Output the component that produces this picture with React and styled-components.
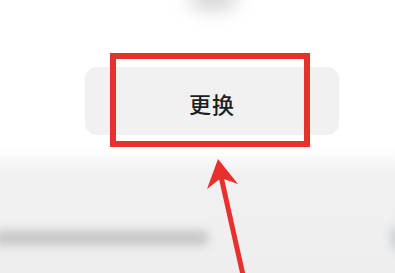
import React from 'react'
import styled, { createGlobalStyle } from 'styled-components'

const GlobalStyle = createGlobalStyle`
  html, body {
    margin: 0;
    padding: 0;
    background: #ffffff;
  }
  body {
    font-family: "Noto Sans CJK SC", "Noto Sans", sans-serif;
  }
`

const Screen = styled.div`
  position: relative;
  width: 395px;
  height: 273px;
  overflow: hidden;
  display: flex;
  flex-direction: column;
  background: #ffffff;
`

const Header = styled.div`
  height: 50px;
  display: flex;
  justify-content: center;
  padding-left: 30px;
`

const Avatar = styled.div`
  width: 50px;
  height: 30px;
  margin-top: -18px;
  border-radius: 50%;
  background: #d8d8d8;
  filter: blur(9px);
`

const ActionRow = styled.div`
  position: relative;
  display: flex;
  padding: 17px 0 0 85px;
  height: 98px;
  box-sizing: border-box;
`

const SwapButton = styled.button`
  width: 254px;
  height: 68px;
  border: none;
  border-radius: 12px;
  background: #f1f1f1;
  color: #1e1e1e;
  font-family: "Noto Sans CJK SC", "Noto Sans", sans-serif;
  font-size: 22px;
  font-weight: 500;
  letter-spacing: 1px;
  padding-top: 4px;
`

const Highlight = styled.div`
  position: absolute;
  left: 110px;
  top: 3px;
  width: 200px;
  height: 94px;
  box-sizing: border-box;
  border: 6px solid #e8302e;
  pointer-events: none;
`

const LowerPanel = styled.div`
  flex: 1;
  display: flex;
  flex-direction: column;
  justify-content: flex-end;
  padding-bottom: 22px;
  background: linear-gradient(180deg, #ffffff 0px, #f1f1f1 24px, #eeeeee 100%);
`

const BlurRow = styled.div`
  display: flex;
  justify-content: space-between;
  align-items: center;
`

const BlurBar = styled.div`
  width: 215px;
  height: 16px;
  margin-left: -6px;
  border-radius: 8px;
  background: #c9c9c9;
  filter: blur(4px);
`

const BlurDot = styled.div`
  width: 14px;
  height: 26px;
  margin-right: -9px;
  border-radius: 50%;
  background: #cdd3d4;
  filter: blur(4px);
`

const ArrowLayer = styled.svg`
  position: absolute;
  left: 0;
  top: 0;
  pointer-events: none;
`

export default function App() {
  return (
    <>
      <GlobalStyle />
      <Screen>
        <Header>
          <Avatar />
        </Header>
        <ActionRow>
          <SwapButton>更换</SwapButton>
          <Highlight />
        </ActionRow>
        <LowerPanel>
          <BlurRow>
            <BlurBar />
            <BlurDot />
          </BlurRow>
        </LowerPanel>
        <ArrowLayer width="395" height="273" viewBox="0 0 395 273">
          <line x1="220" y1="172" x2="243" y2="275" stroke="#e8302e" strokeWidth="5" />
          <polygon points="218,159 207,189 221,178 238,184" fill="#e8302e" />
        </ArrowLayer>
      </Screen>
    </>
  )
}
